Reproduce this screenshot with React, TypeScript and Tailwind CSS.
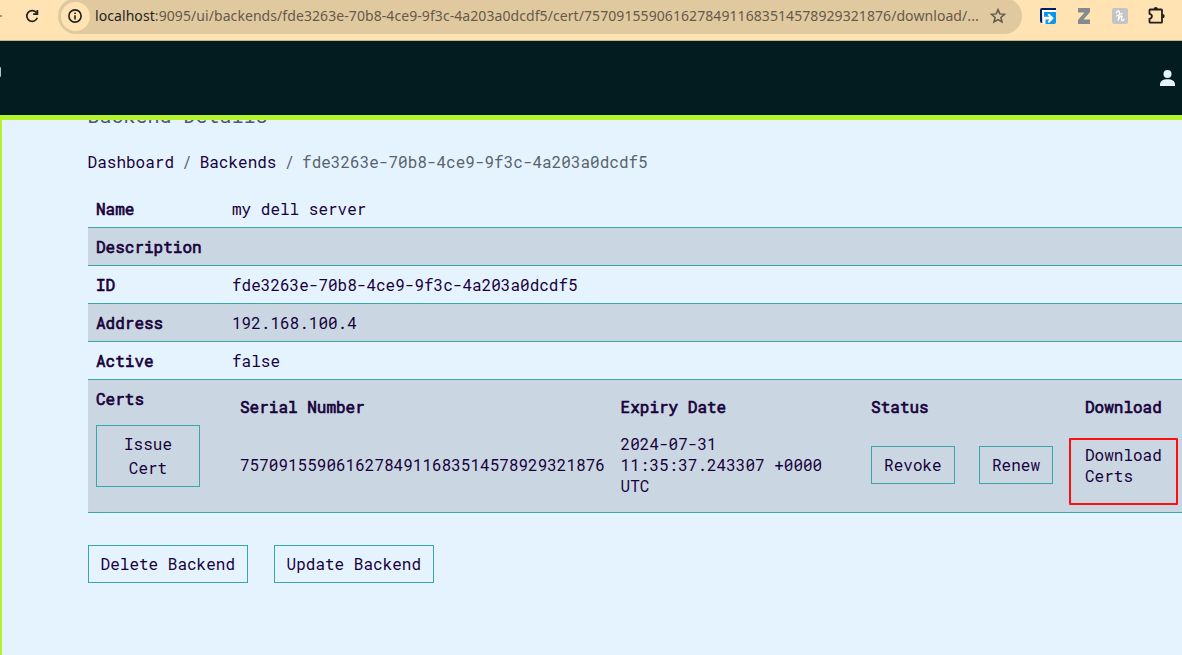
import React from "react";

const mono = "font-['Roboto_Mono','Liberation_Mono',monospace]";
const strong = "[-webkit-text-stroke:0.65px_#18003b]";

function BrowserBar() {
  return (
    <div className="flex h-[41px] shrink-0 items-start overflow-hidden border-b border-[#c9b389] bg-[#ffe3b3]">
      <div className="mt-[15px] h-[2px] w-[2px] shrink-0 bg-[#a4957a]" />
      <svg className="mt-[8px] ml-[22px] shrink-0" width="16" height="16" viewBox="0 0 16 16" fill="none" stroke="#1f1f1f" strokeWidth="1.7">
        <path d="M13.3 9.8A5.4 5.4 0 1 1 12 4.1L13 5.3" />
        <path d="M13.4 2V6.2H9.2" />
      </svg>
      <div className="-mt-[2px] ml-[18px] flex h-[36px] w-[964px] shrink-0 items-center rounded-full bg-[#e0c99f]">
        <div className="ml-[3px] flex h-[29px] w-[29px] shrink-0 items-center justify-center rounded-full bg-[#ffe3b3]">
          <svg className="mr-[1px]" width="14" height="14" viewBox="0 0 14 14" fill="none">
            <circle cx="7" cy="7" r="6.1" stroke="#1f1f1f" strokeWidth="1.6" />
            <path d="M7 6.2V10.4M7 3.4V5" stroke="#1f1f1f" strokeWidth="1.6" />
          </svg>
        </div>
        <div className="ml-[5px] w-[884px] text-[14px] leading-[20px] tracking-[0.075px] whitespace-nowrap text-[#66594a] font-['Noto_Sans',sans-serif]">
          <span className="text-[#1f1f1f]">localhost</span>
          :9095/ui/backends/fde3263e-70b8-4ce9-9f3c-4a203a0dcdf5/cert/75709155906162784911683514578929321876/download/...
        </div>
        <svg className="ml-[10px] shrink-0" width="18" height="18" viewBox="0 0 18 18" fill="none" stroke="#5f5950" strokeWidth="1.5" strokeLinejoin="miter">
          <path d="M9 2.6L10.8 6.9L15.5 7.3L11.9 10.4L13 15L9 12.6L5 15L6.1 10.4L2.5 7.3L7.2 6.9Z" />
        </svg>
      </div>
      <svg className="mt-[8px] ml-[18px] shrink-0" width="16" height="16" viewBox="0 0 16 16">
        <path d="M2 0H16V2H2.5V15H2Q0 15 0 13V2Q0 0 2 0Z" fill="#061f63" />
        <path d="M2 2H16V4H5V16H2.5Z" fill="#fff" />
        <path d="M4 4H16V14Q16 16 14 16H4Z" fill="#0b96ed" />
        <path d="M4 8.8H9.4L7.5 6.9L9 5.6L13.8 10.3L9 15L7.5 13.7L9.4 11.6H5.5V16H3V8.8Z" fill="#fff" />
      </svg>
      <svg className="mt-[8px] ml-[22px] shrink-0" width="12" height="16" viewBox="0 0 12 16">
        <path d="M0 0H12V4L5.5 11.5H12V16H0V12L6.5 4.5H0Z" fill="#858a91" />
      </svg>
      <div className="mt-[8px] ml-[22px] h-[16px] w-[16px] shrink-0 rounded-[2px] bg-[#c4c4c7]">
        <svg width="16" height="16" viewBox="0 0 16 16" fill="none" stroke="#fff" strokeWidth="1.2" strokeLinecap="round">
          <path d="M4.3 5.1C5.2 2.4 7.5 2.2 7.4 4.2L6.2 12.7C7 9.4 9.6 6.6 10 8.4C10.1 9.5 8.8 12.3 10 12.7Q11.3 12.7 12 11.2M4.6 8L10.2 5.3" />
        </svg>
      </div>
      <svg className="mt-[6px] ml-[19px] shrink-0" width="20" height="20" viewBox="0 0 20 20" fill="none">
        <path d="M3.2 3.5H14.3Q15 3.5 15 4.2V15.9Q15 16.7 14.3 16.7H3.2Q2.5 16.7 2.5 15.9V12.8C5.7 12.3 5.7 8.3 2.5 7.8V4.2Q2.5 3.5 3.2 3.5Z" stroke="#1f1f1f" strokeWidth="1.8" />
        <path d="M6.7 3.2a2.1 2.1 0 0 1 4.2 0ZM15.5 7.9a2.2 2.2 0 0 1 0 4.4Z" fill="#1f1f1f" />
      </svg>
    </div>
  );
}

function Button({ children }: { children: React.ReactNode }) {
  return (
    <button className="flex h-[38px] items-center border border-[#3aa6a8] px-[12px] leading-[24px] whitespace-nowrap">
      {children}
    </button>
  );
}

const details = [
  ["Name", "my dell server"],
  ["Description", ""],
  ["ID", "fde3263e-70b8-4ce9-9f3c-4a203a0dcdf5"],
  ["Address", "192.168.100.4"],
  ["Active", "false"],
];

function Certificates() {
  return (
    <div className="flex h-[133px] border-b border-[#3aa6a8] bg-[#cad7e2] pl-[8.4px]">
      <div className="w-[144px] shrink-0 pt-[7px]">
        <div className={strong}>Certs</div>
        <button className="mt-[14px] h-[62px] w-[104px] border border-[#3aa6a8] px-[12px] text-center leading-[24px]">
          Issue Cert
        </button>
      </div>
      <div className="grid grid-cols-[380.6px_250.5px_107.9px_106px_97px] grid-rows-[38px_77px] items-center pt-[8px]">
        <div className={strong}>Serial Number</div>
        <div className={strong}>Expiry Date</div>
        <div className={strong}>Status</div>
        <div />
        <div className={strong}>Download</div>
        <div>75709155906162784911683514578929321876</div>
        <div className="leading-[21px]">2024-07-31<br />11:35:37.243307 +0000<br />UTC</div>
        <div className="flex"><Button>Revoke</Button></div>
        <div className="flex"><Button>Renew</Button></div>
        <div className="relative leading-[21px]">
          Download<br />Certs
          <div className="absolute -top-[6px] -left-[16px] h-[67px] w-[109px] rounded-[1px] border-2 border-[#fa1010]" />
        </div>
      </div>
    </div>
  );
}

export default function App() {
  return (
    <div className={`flex h-[655px] w-[1182px] flex-col overflow-hidden bg-[#e5f3ff] text-[16px] leading-[24px] text-[#18003b] ${mono}`}>
      <BrowserBar />
      <header className="flex h-[79px] shrink-0 items-start justify-between border-b-[5px] border-[#b4f22e] bg-[#021c20]">
        <div className="mt-[26px] h-[10px] w-[1px] rounded-r bg-[#b7c3cb]" />
        <svg className="mt-[29px] mr-[7px]" width="15" height="16" viewBox="0 0 15 16" fill="#e5f3ff">
          <circle cx="7.5" cy="4" r="4" />
          <path d="M0 16V14.5C0 10.8 3 9.2 7.5 9.2S15 10.8 15 14.5V16Z" />
        </svg>
      </header>
      <main className="flex-1 overflow-hidden border-l-2 border-[#b4f22e] pl-[85.6px]">
        <h1 className="-mt-[17px] h-[24px] text-[20px] leading-[24px] text-[#4e5b66]">Backend Details</h1>
        <nav className="mt-[23px] flex">
          <span>Dashboard</span>
          <span className="px-[8px] text-[#59636b]">/</span>
          <span>Backends</span>
          <span className="px-[8px] text-[#59636b]">/</span>
          <span className="text-[#59636b]">fde3263e-70b8-4ce9-9f3c-4a203a0dcdf5</span>
        </nav>
        <section className="mt-[16px]">
          {details.map(([label, value]) => (
            <div key={label} className="flex h-[38px] items-center border-b border-[#3aa6a8] pl-[8.4px] even:bg-[#cad7e2]">
              <span className={`w-[136px] ${strong}`}>{label}</span>
              <span>{value}</span>
            </div>
          ))}
          <Certificates />
        </section>
        <div className="mt-[32px] flex gap-[25.6px]">
          <Button>Delete Backend</Button>
          <Button>Update Backend</Button>
        </div>
      </main>
    </div>
  );
}
